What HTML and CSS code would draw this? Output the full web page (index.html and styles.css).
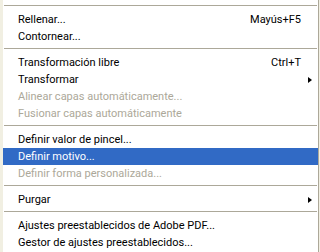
FILE: index.html
```html
<!DOCTYPE html>
<html lang="es">
<head>
  <meta charset="UTF-8">
  <title>Edición</title>
  <link rel="stylesheet" href="styles.css">
</head>
<body>
  <div class="menu">
    <div class="sep"></div>
    <div class="item"><span class="label">Rellenar...</span><span class="key">Mayús+F5</span><span class="sub"></span></div>
    <div class="item"><span class="label">Contornear...</span><span class="sub"></span></div>
    <div class="sep"></div>
    <div class="item"><span class="label">Transformación libre</span><span class="key">Ctrl+T</span><span class="sub"></span></div>
    <div class="item"><span class="label">Transformar</span><span class="sub"><i class="arrow"></i></span></div>
    <div class="item disabled"><span class="label">Alinear capas automáticamente...</span><span class="sub"></span></div>
    <div class="item disabled"><span class="label">Fusionar capas automáticamente</span><span class="sub"></span></div>
    <div class="sep"></div>
    <div class="item"><span class="label">Definir valor de pincel...</span><span class="sub"></span></div>
    <div class="item active"><span class="label">Definir motivo...</span><span class="sub"></span></div>
    <div class="item disabled"><span class="label">Definir forma personalizada...</span><span class="sub"></span></div>
    <div class="sep"></div>
    <div class="item"><span class="label">Purgar</span><span class="sub"><i class="arrow"></i></span></div>
    <div class="sep"></div>
    <div class="item"><span class="label">Ajustes preestablecidos de Adobe PDF...</span><span class="sub"></span></div>
    <div class="item"><span class="label">Gestor de ajustes preestablecidos...</span><span class="sub"></span></div>
  </div>
</body>
</html>
```

FILE: styles.css
```css
html, body {
  margin: 0;
  height: 100%;
  overflow: hidden;
}
body {
  background-color: #f1efe2;
  font-family: Roboto, 'Liberation Sans', Arial, sans-serif;
  font-size: 11px;
  color: #000;
}
.menu {
  box-sizing: border-box;
  width: 316px;
  height: 100%;
  margin-left: 3px;
  padding-top: 2px;
  background-color: #fff;
  border-right: 1px solid #aca899;
}
.sep {
  height: 1px;
  margin: 3px 1px 5px 1px;
  background-color: #aca899;
}
.item {
  display: flex;
  align-items: center;
  height: 17px;
  line-height: 17px;
  padding-left: 15px;
  white-space: nowrap;
}
.label {
  flex: 1;
}
.key {
  text-align: right;
}
.sub {
  width: 17px;
  display: flex;
  align-items: center;
}
.arrow {
  display: block;
  margin-left: 7px;
  width: 0;
  height: 0;
  border-top: 3px solid transparent;
  border-bottom: 3px solid transparent;
  border-left: 4px solid #000;
}
.disabled {
  color: #aca899;
}
.active {
  background-color: #316ac5;
  color: #fff;
}
```
